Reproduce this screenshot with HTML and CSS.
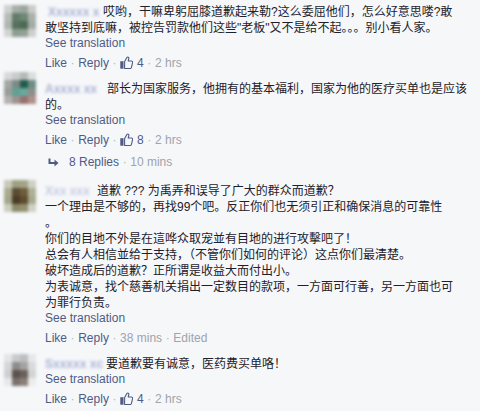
FILE: index.html
```html
<!DOCTYPE html>
<html lang="zh">
<head>
<meta charset="utf-8">
<title>Comments</title>
<link rel="stylesheet" href="styles.css">
</head>
<body>
<div class="feed">

  <div class="comment">
    <div class="avatar av1"></div>
    <div class="body">
      <div class="text"><span class="name n1">Xxxxxx x</span>哎哟，干嘛卑躬屈膝道歉起来勒?这么委屈他们，怎么好意思喽?敢<br>敢坚持到底嘛，被控告罚款他们这些"老板"又不是给不起。。。别小看人家。</div>
      <div class="translate">See translation</div>
      <div class="actions"><span class="link">Like</span><span class="sep">·</span><span class="link">Reply</span><span class="sep">·</span><svg class="thumb" width="13" height="13" viewBox="0 0 13 13"><rect x="0.3" y="5.2" width="3.2" height="7.5" fill="currentColor"/><path d="M4.6 5.6 L6.9 1.4 C7.7 0.6 9.1 1.2 8.8 2.6 L8.2 5 H11.4 C12.3 5 12.9 5.8 12.6 6.6 L11.4 11.6 C11.2 12.2 10.7 12.5 10.1 12.5 H4.6 Z" fill="none" stroke="currentColor" stroke-width="1.1" stroke-linejoin="round"/></svg><span class="link">4</span><span class="sep">·</span><span class="meta">2 hrs</span></div>
    </div>
  </div>

  <div class="comment">
    <div class="avatar av2"></div>
    <div class="body">
      <div class="text"><span class="name n2">Axxxx xx</span>部长为国家服务，他拥有的基本福利，国家为他的医疗买单也是应该<br>的。</div>
      <div class="translate">See translation</div>
      <div class="actions"><span class="link">Like</span><span class="sep">·</span><span class="link">Reply</span><span class="sep">·</span><svg class="thumb" width="13" height="13" viewBox="0 0 13 13"><rect x="0.3" y="5.2" width="3.2" height="7.5" fill="currentColor"/><path d="M4.6 5.6 L6.9 1.4 C7.7 0.6 9.1 1.2 8.8 2.6 L8.2 5 H11.4 C12.3 5 12.9 5.8 12.6 6.6 L11.4 11.6 C11.2 12.2 10.7 12.5 10.1 12.5 H4.6 Z" fill="none" stroke="currentColor" stroke-width="1.1" stroke-linejoin="round"/></svg><span class="link">8</span><span class="sep">·</span><span class="meta">2 hrs</span></div>
      <div class="replies"><svg class="arrow" width="11" height="9" viewBox="0 0 11 9"><path d="M1.5 0.5 V5 H7.5" fill="none" stroke="currentColor" stroke-width="2"/><path d="M6.5 1.5 L10.5 5 L6.5 8.5 Z" fill="currentColor"/></svg><span class="link">8 Replies</span><span class="sep">·</span><span class="meta">10 mins</span></div>
    </div>
  </div>

  <div class="comment">
    <div class="avatar av3"></div>
    <div class="body">
      <div class="text"><span class="name n3">Xxx xxx</span>道歉 ??? 为禹弄和误导了广大的群众而道歉？<br>一个理由是不够的，再找99个吧。反正你们也无须引正和确保消息的可靠性<br>。<br>你们的目地不外是在這哗众取宠並有目地的进行攻擊吧了！<br>总会有人相信並给于支持，（不管你们如何的评论）这点你们最清楚。<br>破坏造成后的道歉？正所谓是收益大而付出小。<br>为表诚意，找个慈善机关捐出一定数目的款项，一方面可行善，另一方面也可<br>为罪行负责。</div>
      <div class="translate">See translation</div>
      <div class="actions"><span class="link">Like</span><span class="sep">·</span><span class="link">Reply</span><span class="sep">·</span><span class="meta">38 mins</span><span class="sep">·</span><span class="meta">Edited</span></div>
    </div>
  </div>

  <div class="comment">
    <div class="avatar av4"></div>
    <div class="body">
      <div class="text"><span class="name n4">Sxxxxx xc</span>要道歉要有诚意，医药费买单咯！</div>
      <div class="translate">See translation</div>
      <div class="actions"><span class="link">Like</span><span class="sep">·</span><span class="link">Reply</span><span class="sep">·</span><svg class="thumb" width="13" height="13" viewBox="0 0 13 13"><rect x="0.3" y="5.2" width="3.2" height="7.5" fill="currentColor"/><path d="M4.6 5.6 L6.9 1.4 C7.7 0.6 9.1 1.2 8.8 2.6 L8.2 5 H11.4 C12.3 5 12.9 5.8 12.6 6.6 L11.4 11.6 C11.2 12.2 10.7 12.5 10.1 12.5 H4.6 Z" fill="none" stroke="currentColor" stroke-width="1.1" stroke-linejoin="round"/></svg><span class="link">4</span><span class="sep">·</span><span class="meta">2 hrs</span></div>
    </div>
  </div>

</div>
</body>
</html>
```

FILE: styles.css
```css
html, body {
  margin: 0;
  padding: 0;
  background: #f6f7f9;
}

body {
  font-family: "Liberation Sans", "Noto Sans CJK SC", sans-serif;
  overflow: hidden;
}

.feed {
  display: flex;
  flex-direction: column;
  gap: 10px;
  padding: 4px 0 0 4px;
}

.comment {
  display: flex;
  gap: 9px;
}

.avatar {
  width: 32px;
  height: 32px;
  flex: none;
  filter: blur(1.6px);
}

.av1 {
  background:
    linear-gradient(90deg, #cfd2cf 0 25%, #a7afa8 25% 50%, #9ca69e 50% 75%, #c9ccc9 75%) 0 0 / 100% 8px no-repeat,
    linear-gradient(90deg, #b7bcb7 0 25%, #617c68 25% 50%, #6e8874 50% 75%, #aab1ab 75%) 0 8px / 100% 8px no-repeat,
    linear-gradient(90deg, #b0b6b0 0 25%, #56725e 25% 50%, #4d6a56 50% 75%, #a3aca4 75%) 0 16px / 100% 8px no-repeat,
    linear-gradient(90deg, #d2d4d1 0 25%, #8f9d91 25% 50%, #93a095 50% 75%, #cdd0cd 75%) 0 24px / 100% 8px no-repeat;
  margin-top: 1px;
}

.av2 {
  background:
    linear-gradient(90deg, #d8dad9 0 25%, #c9cccb 25% 50%, #b5bab8 50% 75%, #dcdedd 75%) 0 0 / 100% 8px no-repeat,
    linear-gradient(90deg, #a3a7a5 0 25%, #7d8a86 25% 50%, #1e5c4c 50% 75%, #6c8e85 75%) 0 8px / 100% 8px no-repeat,
    linear-gradient(90deg, #9a9d9b 0 25%, #5fa193 25% 50%, #6aa89b 50% 75%, #8e8d8b 75%) 0 16px / 100% 8px no-repeat,
    linear-gradient(90deg, #b4b2b0 0 25%, #9c9391 25% 50%, #98706f 50% 75%, #b08f8c 75%) 0 24px / 100% 8px no-repeat;
  margin-top: -9px;
}

.av3 {
  background:
    linear-gradient(90deg, #c8c9bb 0 25%, #9ea085 25% 50%, #a2a488 50% 75%, #cfd0c4 75%) 0 0 / 100% 8px no-repeat,
    linear-gradient(90deg, #a9ab92 0 25%, #5b4c30 25% 50%, #6e5d3c 50% 75%, #aeb096 75%) 0 8px / 100% 8px no-repeat,
    linear-gradient(90deg, #a4a68c 0 25%, #4a3b24 25% 50%, #5e4c2f 50% 75%, #a7a98f 75%) 0 16px / 100% 8px no-repeat,
    linear-gradient(90deg, #cbcdbf 0 25%, #8c8a6a 25% 50%, #93906f 50% 75%, #d0d1c5 75%) 0 24px / 100% 8px no-repeat;
  margin-top: -3px;
}

.av4 {
  background:
    linear-gradient(90deg, #e4e5e6 0 25%, #c9cacc 25% 50%, #bdbec0 50% 75%, #e6e7e8 75%) 0 0 / 100% 8px no-repeat,
    linear-gradient(90deg, #d5d6d7 0 25%, #8e8b8a 25% 50%, #a5a3a2 50% 75%, #d9dadb 75%) 0 8px / 100% 8px no-repeat,
    linear-gradient(90deg, #cfcfd0 0 25%, #5b524d 25% 50%, #6a605a 50% 75%, #d3d3d4 75%) 0 16px / 100% 8px no-repeat,
    linear-gradient(90deg, #e7e8e9 0 25%, #7c726c 25% 50%, #8a8079 50% 75%, #ebecec 75%) 0 24px / 100% 8px no-repeat;
  margin-top: -2px;
}

.body {
  flex: 1;
  min-width: 0;
}

.text {
  font-size: 12px;
  line-height: 16px;
  color: #1d2129;
  white-space: nowrap;
}

.name {
  display: inline-block;
  vertical-align: top;
  height: 16px;
  font-weight: bold;
  color: #aab3d4;
  filter: blur(1.4px);
  white-space: nowrap;
  overflow: hidden;
  box-sizing: border-box;
}

.n1 { width: 56px; margin-right: 2px; padding-left: 3px; }
.n2 { width: 60px; margin-right: 2px; }
.n3 { width: 50px; margin-right: 2px; color: #c6cce2; }
.n4 { width: 59px; margin-right: 2px; }

.translate {
  font-size: 12px;
  line-height: 14px;
  color: #4e5b85;
}

.actions,
.replies {
  display: flex;
  align-items: center;
  font-size: 12px;
  line-height: 16px;
  white-space: nowrap;
}

.actions {
  margin-top: 5px;
}

.replies {
  margin-top: 6px;
  margin-bottom: 3px;
  padding-left: 3px;
}

.link {
  color: #4e5b85;
}

.meta {
  color: #9ea3ac;
}

.sep {
  color: #b3b7bf;
  margin: 0 3.6px;
}

.thumb {
  color: #4e5b85;
  margin-right: 4px;
  margin-top: -2px;
}

.arrow {
  color: #4e5b85;
  margin-right: 10px;
}
```
